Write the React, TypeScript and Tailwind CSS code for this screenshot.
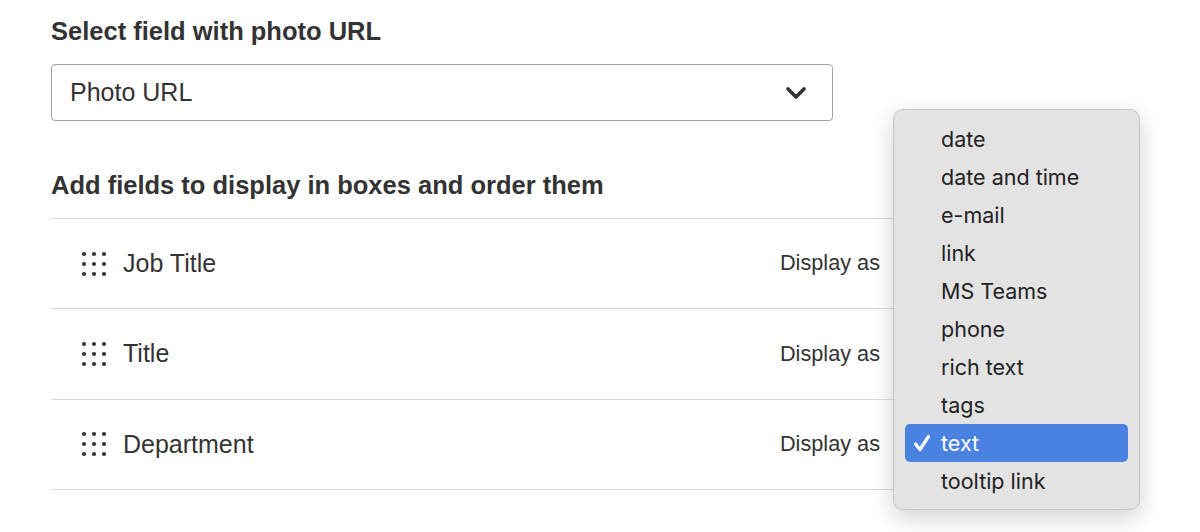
import React from 'react';

const fields = ['Job Title', 'Title', 'Department'];

const options = [
  'date',
  'date and time',
  'e-mail',
  'link',
  'MS Teams',
  'phone',
  'rich text',
  'tags',
  'text',
  'tooltip link',
];

const DragHandle: React.FC = () => (
  <svg width="28" height="28" viewBox="0 0 28 28" className="shrink-0">
    {[4, 14, 24].map((y) =>
      [4, 14, 24].map((x) => <circle key={`${x}-${y}`} cx={x} cy={y} r="2.1" fill="#333" />)
    )}
  </svg>
);

const Chevron: React.FC = () => (
  <svg width="22" height="14" viewBox="0 0 22 14">
    <polyline
      points="3,3 11,11 19,3"
      fill="none"
      stroke="#333"
      strokeWidth="3.6"
      strokeLinecap="round"
      strokeLinejoin="round"
    />
  </svg>
);

const Check: React.FC = () => (
  <svg width="18" height="20" viewBox="0 0 18 20">
    <polyline
      points="2.5,11 7,16.5 15.5,3.5"
      fill="none"
      stroke="#fff"
      strokeWidth="3.2"
      strokeLinecap="round"
      strokeLinejoin="round"
    />
  </svg>
);

const OptionsMenu: React.FC = () => (
  <div
    className="absolute left-[893px] top-[109px] w-[247px] rounded-[10px] border border-[#c4c4c4] bg-[#e3e3e3] pt-[10px] pb-[9px] shadow-[0_8px_24px_rgba(0,0,0,0.18)]"
    style={{ fontFamily: 'Inter, "Noto Sans", sans-serif' }}
  >
    {options.map((opt) => {
      const selected = opt === 'text';
      return (
        <div
          key={opt}
          className={
            selected
              ? 'mx-[11px] flex h-[38px] items-center rounded-[5px] bg-[#4a82e1] text-white'
              : 'mx-[11px] flex h-[38px] items-center text-[#222]'
          }
        >
          <span className="flex w-[36px] pl-[8px]">{selected ? <Check /> : null}</span>
          <span className="text-[21.5px]">{opt}</span>
        </div>
      );
    })}
  </div>
);

export default function App() {
  return (
    <div
      className="relative h-[532px] w-[1200px] overflow-hidden bg-white text-[#333]"
      style={{ fontFamily: '"Liberation Sans", Arial, sans-serif' }}
    >
      <div className="w-[1100px] pl-[51px] pt-[15px]">
        <h2 className="text-[25.5px] font-bold leading-[32px]">Select field with photo URL</h2>
        <div className="mt-[17px] flex h-[57px] w-[782px] items-center justify-between rounded-[4px] border border-[#a0a0a0] pl-[18px] pr-[25px]">
          <span className="text-[25px]">Photo URL</span>
          <Chevron />
        </div>

        <h2 className="mt-[48px] text-[25.5px] font-bold leading-[32px]">
          Add fields to display in boxes and order them
        </h2>
        <div className="mt-[17px] border-t border-[#dcdcdc]">
          {fields.map((f) => (
            <div key={f} className="flex h-[90.4px] items-center border-b border-[#dcdcdc] pl-[29px]">
              <DragHandle />
              <span className="ml-[15px] text-[25px]">{f}</span>
              <span className="ml-auto mr-[20px] text-[21.7px]">Display as</span>
              <div className="h-[50px] w-[200px]" />
            </div>
          ))}
        </div>
      </div>
      <OptionsMenu />
    </div>
  );
}
